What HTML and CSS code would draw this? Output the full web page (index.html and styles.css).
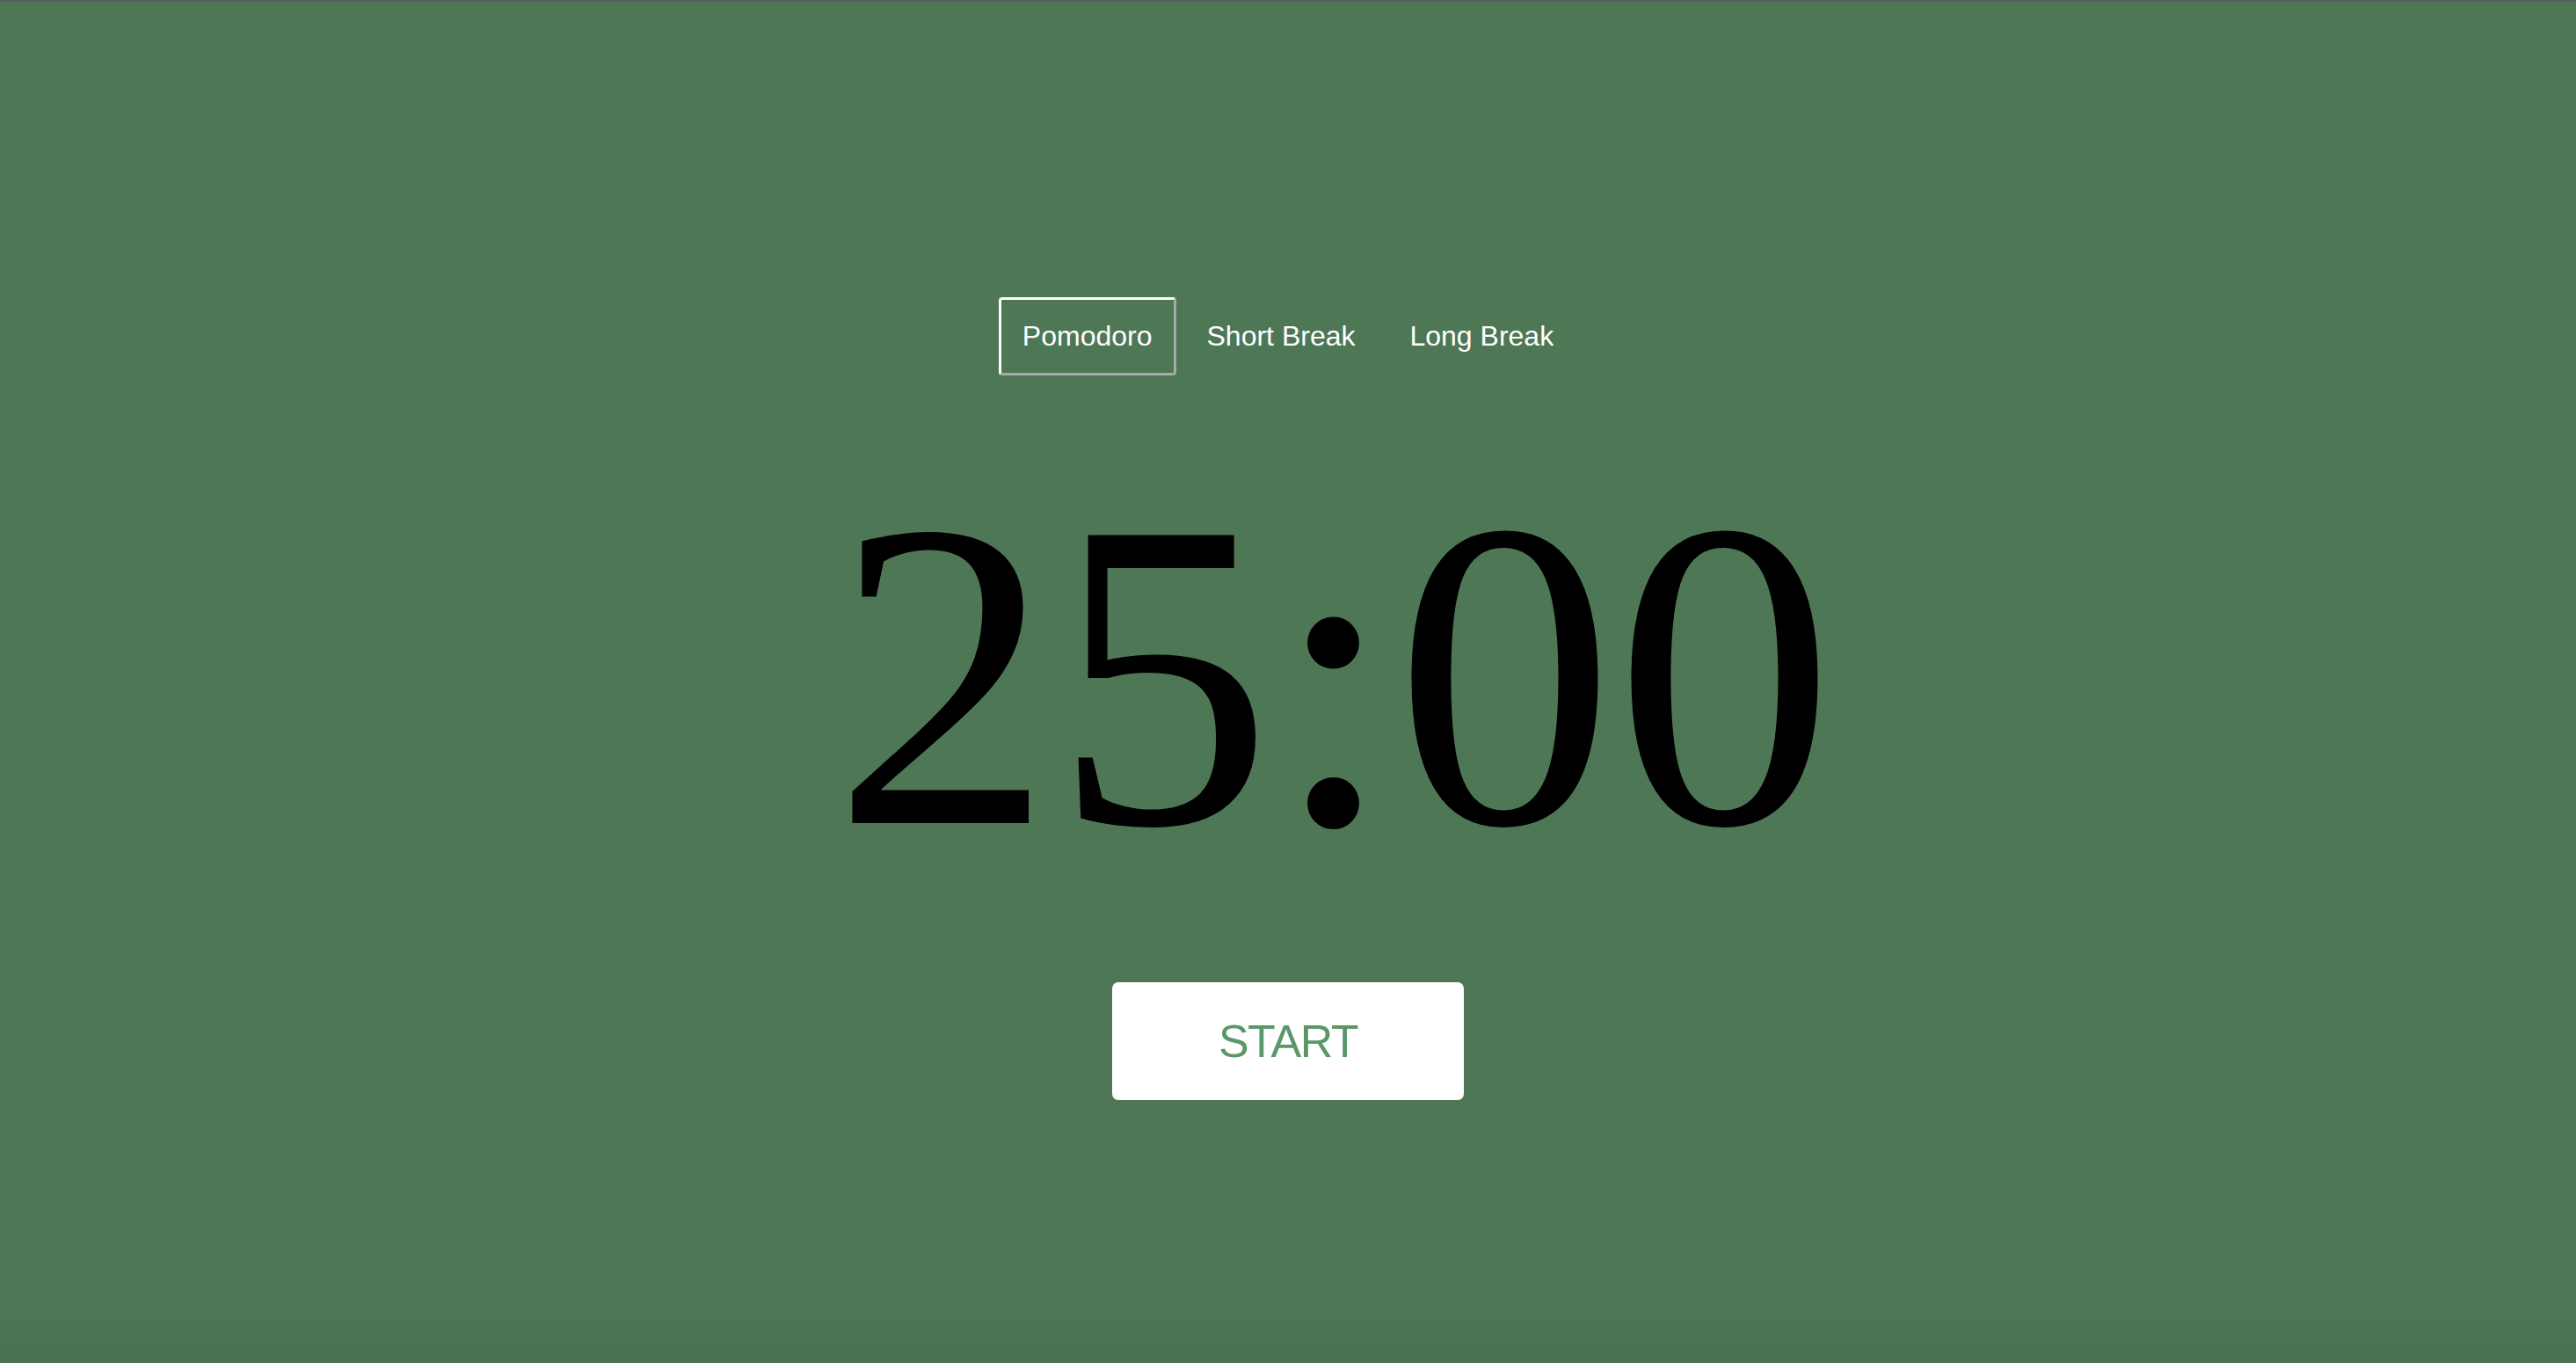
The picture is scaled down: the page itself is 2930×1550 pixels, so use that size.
FILE: index.html
```html
<!DOCTYPE html>
<html lang="en">
<head>
<meta charset="utf-8">
<title>Pomodoro</title>
<link rel="stylesheet" href="styles.css">
</head>
<body>
<main class="app">
  <nav class="tabs">
    <button class="tab tab-active">Pomodoro</button>
    <button class="tab">Short Break</button>
    <button class="tab">Long Break</button>
  </nav>
  <div class="timer">25:00</div>
  <button class="start">START</button>
</main>
</body>
</html>
```

FILE: styles.css
```css
html, body {
  margin: 0;
  padding: 0;
}
body {
  height: 1550px;
  box-sizing: border-box;
  background: linear-gradient(to bottom, #4e7756 0%, #4e7756 96%, #4a7152 100%);
  border-top: 2px solid #5d5d61;
  font-family: "Liberation Sans", Arial, sans-serif;
  overflow: hidden;
}
.app {
  display: flex;
  flex-direction: column;
  align-items: center;
  padding-top: 336px;
}
.tabs {
  display: flex;
  gap: 8px;
}
.tab {
  font-family: "Liberation Sans", Arial, sans-serif;
  font-size: 32px;
  line-height: 37px;
  color: #ffffff;
  background: transparent;
  border: 2px solid transparent;
  border-radius: 4px;
  padding: 24px 25px;
  margin: 0;
  cursor: pointer;
}
.tab-active {
  border-width: 3px;
  padding: 23px 24px;
  border-top-color: #ffffff;
  border-left-color: #ffffff;
  border-right-color: #a9aaa9;
  border-bottom-color: #a9aaa9;
}
.timer {
  font-family: "Liberation Serif", "Times New Roman", serif;
  font-size: 500px;
  line-height: 500px;
  color: #000000;
  margin-top: 90px;
  margin-left: 104px;
}
.start {
  margin-top: 100px;
  width: 400px;
  height: 134px;
  background: #ffffff;
  border: none;
  border-radius: 7px;
  color: #5a9869;
  font-family: "Liberation Sans", Arial, sans-serif;
  font-size: 52px;
  letter-spacing: -1.5px;
  padding: 0;
  cursor: pointer;
}
```
